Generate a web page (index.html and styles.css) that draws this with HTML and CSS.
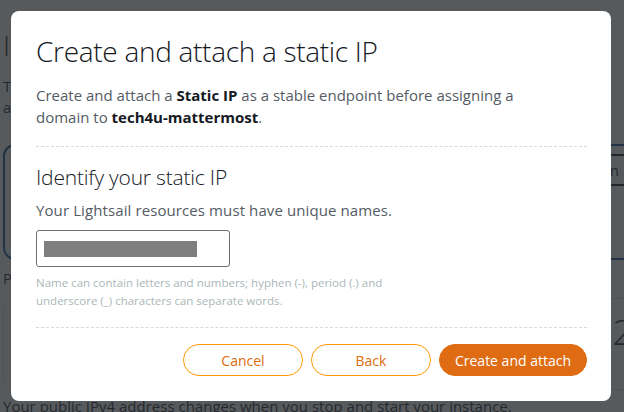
FILE: index.html
```html
<!DOCTYPE html>
<html lang="en">
<head>
<meta charset="utf-8">
<title>Create and attach a static IP</title>
<link rel="stylesheet" href="styles.css">
</head>
<body>
<div class="page">
  <h1 class="page-title">IPv4 networking</h1>
  <p class="page-text">The public IP address of your instance is accessible to the internet.<br>attached to your instance.</p>
  <div class="card card-blue">
    <div class="card-row">
      <span class="card-copy">Attach a static IP</span>
      <span class="outline-btn">Learn</span>
    </div>
  </div>
  <p class="page-label">Public IP</p>
  <div class="card card-gray">
    <span class="big-num">2</span>
  </div>
  <p class="page-foot">Your public IPv4 address changes when you stop and start your instance.</p>
</div>

<div class="overlay">
  <div class="modal">
    <h2 class="modal-title">Create and attach a static IP</h2>
    <p class="modal-intro">Create and attach a <strong>Static IP</strong> as a stable endpoint before assigning a domain to <strong>tech4u-mattermost</strong>.</p>
    <hr class="divider">
    <h3 class="section-title">Identify your static IP</h3>
    <p class="section-desc">Your Lightsail resources must have unique names.</p>
    <div class="field">
      <span class="redacted"></span>
    </div>
    <p class="hint">Name can contain letters and numbers; hyphen (-), period (.) and<br>underscore (_) characters can separate words.</p>
    <hr class="divider divider-bottom">
    <div class="actions">
      <button class="btn btn-secondary">Cancel</button>
      <button class="btn btn-secondary">Back</button>
      <button class="btn btn-primary">Create and attach</button>
    </div>
  </div>
</div>
</body>
</html>
```

FILE: styles.css
```css
html, body {
  margin: 0;
  padding: 0;
  width: 624px;
  height: 412px;
  overflow: hidden;
  background: #ffffff;
  font-family: "Open Sans", "Liberation Sans", sans-serif;
}

.page {
  box-sizing: border-box;
  width: 624px;
  height: 412px;
  overflow: hidden;
  padding: 28px 0 0 3px;
  color: #16191f;
}

.page-title {
  margin: 0;
  font-size: 28px;
  font-weight: 300;
  line-height: 34px;
  white-space: nowrap;
}

.page-text {
  margin: 14px 0 0;
  font-size: 15px;
  line-height: 21px;
  white-space: nowrap;
}

.card {
  border-radius: 12px;
  background: #fff;
}

.card-blue {
  margin-top: 26px;
  width: 680px;
  height: 112px;
  border: 2px solid #0a4a8a;
}

.card-row {
  display: flex;
  justify-content: space-between;
  align-items: center;
  padding: 8px 50px 0 20px;
}

.card-copy {
  font-size: 15px;
}

.outline-btn {
  display: inline-block;
  padding: 4px 14px;
  border: 2px solid #16191f;
  font-size: 15px;
}

.page-label {
  margin: 8px 0 0;
  font-size: 15px;
  line-height: 21px;
}

.card-gray {
  margin-top: 9px;
  width: 680px;
  height: 92px;
  border: 1px solid #d5dbdb;
  display: flex;
  justify-content: flex-end;
  padding-right: 50px;
  box-sizing: border-box;
}

.big-num {
  font-size: 34px;
  font-weight: 300;
  margin-top: 10px;
}

.page-foot {
  margin: 6px 0 0;
  font-size: 15px;
  white-space: nowrap;
}

.overlay {
  position: fixed;
  inset: 0;
  background: rgba(40, 43, 47, 0.78);
  display: flex;
  justify-content: center;
  align-items: flex-start;
  padding-top: 11px;
}

.modal {
  box-sizing: border-box;
  width: 600px;
  height: 390px;
  margin-left: -2px;
  padding: 23px 24px 0 25px;
  background: #ffffff;
  border-radius: 8px;
  color: #545b64;
}

.modal-title {
  margin: 0;
  font-size: 28px;
  font-weight: 300;
  line-height: 34px;
  color: #16191f;
  letter-spacing: -0.3px;
}

.modal-intro {
  max-width: 505px;
  margin: 16px 0 0;
  font-size: 15px;
  line-height: 22px;
  color: #545b64;
}

.modal-intro strong {
  color: #16191f;
  font-weight: 700;
}

.divider {
  margin: 18px 0 0;
  border: 0;
  border-top: 1px dashed #d5dbdb;
  height: 0;
}

.section-title {
  margin: 16px 0 0;
  font-size: 21px;
  font-weight: 300;
  line-height: 28px;
  color: #16191f;
  letter-spacing: -0.2px;
}

.section-desc {
  margin: 8px 0 0;
  font-size: 15px;
  line-height: 22px;
  letter-spacing: 0.1px;
}

.field {
  box-sizing: border-box;
  width: 194px;
  height: 37px;
  margin-top: 9px;
  border: 1px solid #687078;
  border-radius: 3px;
  display: flex;
  align-items: center;
  padding-left: 7px;
}

.redacted {
  display: block;
  width: 153px;
  height: 16px;
  background: #7f7f7f;
}

.hint {
  margin: 7px 0 0;
  font-size: 11.5px;
  line-height: 18px;
  color: #aab7b8;
}

.divider-bottom {
  margin-top: 17px;
}

.actions {
  display: flex;
  justify-content: flex-end;
  gap: 8px;
  margin-top: 16px;
}

.btn {
  box-sizing: border-box;
  height: 32px;
  border-radius: 16px;
  font-family: inherit;
  font-size: 14px;
  cursor: pointer;
  padding: 0;
}

.btn-secondary {
  width: 120px;
  background: #ffffff;
  border: 1px solid #ff9900;
  color: #dd6b10;
}

.btn-primary {
  width: 148px;
  background: #df6c12;
  border: 1px solid #df6c12;
  color: #ffffff;
}
```
